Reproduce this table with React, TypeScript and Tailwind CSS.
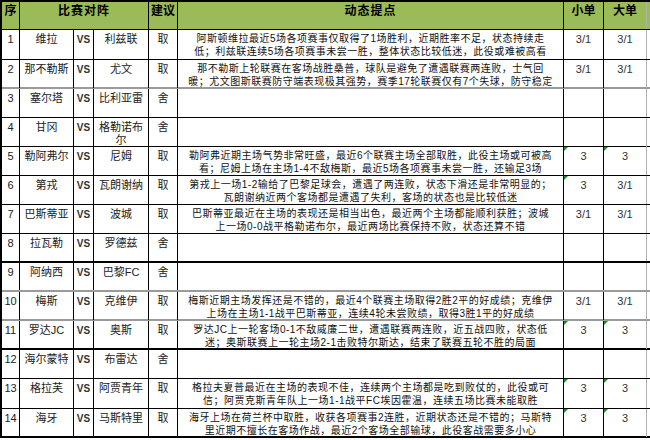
const COLS = 'grid grid-cols-[18px_54px_20px_55px_29px_386px_40px_43px]';

type Row = {
  n: string;
  home: string[];
  away: string[];
  pick: string;
  lines: string[];
  small: string;
  big: string;
  edge: string;
  h: string;
};

const rows: Row[] = [
  {
    n: '1', home: ['维拉'], away: ['利兹联'], pick: '取',
    lines: ['阿斯顿维拉最近5场各项赛事仅取得了1场胜利，近期胜率不足，状态持续走', '低；利兹联连续5场各项赛事未尝一胜，整体状态比较低迷，此役或难被高看'],
    small: '3/1', big: '3/1', edge: 'border-b border-black', h: 'h-[30px]',
  },
  {
    n: '2', home: ['那不勒斯'], away: ['尤文'], pick: '取',
    lines: ['那不勒斯上轮联赛在客场战胜桑普，球队是避免了遭遇联赛两连败，士气回', '暖；尤文图斯联赛防守端表现极其强势，赛季17轮联赛仅有7个失球，防守稳定'],
    small: '3/1', big: '3/1', edge: 'border-b-2 border-[#9a9a9a]', h: 'h-[29px]',
  },
  { n: '3', home: ['塞尔塔'], away: ['比利亚雷'], pick: '舍', lines: [], small: '', big: '', edge: 'border-b border-black', h: 'h-[29px]' },
  { n: '4', home: ['甘冈'], away: ['格勒诺布', '尔'], pick: '舍', lines: [], small: '', big: '', edge: 'border-b border-black', h: 'h-[29px]' },
  {
    n: '5', home: ['勒阿弗尔'], away: ['尼姆'], pick: '取',
    lines: ['勒阿弗近期主场气势非常旺盛，最近6个联赛主场全部取胜，此役主场或可被高', '看；尼姆上场在主场1-4不敌梅斯，最近5场各项赛事未尝一胜，还输足3场'],
    small: '3', big: '3', edge: 'border-b border-black', h: 'h-[29px]',
  },
  {
    n: '6', home: ['第戎'], away: ['瓦朗谢纳'], pick: '取',
    lines: ['第戎上一场1-2输给了巴黎足球会，遭遇了两连败，状态下滑还是非常明显的；', '瓦朗谢纳近两个客场都是遭遇了失利，客场的状态也是比较低迷'],
    small: '3', big: '3/1', edge: 'border-b border-black', h: 'h-[29px]',
  },
  {
    n: '7', home: ['巴斯蒂亚'], away: ['波城'], pick: '取',
    lines: ['巴斯蒂亚最近在主场的表现还是相当出色，最近两个主场都能顺利获胜；波城', '上一场0-0战平格勒诺布尔，最近两场比赛保持不败，状态还算不错'],
    small: '3/1', big: '3/1', edge: 'border-b border-black', h: 'h-[29px]',
  },
  { n: '8', home: ['拉瓦勒'], away: ['罗德兹'], pick: '舍', lines: [], small: '', big: '', edge: 'border-b-2 border-black', h: 'h-[29px]' },
  { n: '9', home: ['阿纳西'], away: ['巴黎FC'], pick: '舍', lines: [], small: '', big: '', edge: 'border-b-2 border-[#9a9a9a]', h: 'h-[29px]' },
  {
    n: '10', home: ['梅斯'], away: ['克维伊'], pick: '取',
    lines: ['梅斯近期主场发挥还是不错的，最近4个联赛主场取得2胜2平的好成绩；克维伊', '上场在主场1-1战平巴斯蒂亚，连续4轮未尝败绩，取得3胜1平的好成绩'],
    small: '3/1', big: '3/1', edge: 'border-b-2 border-[#9a9a9a]', h: 'h-[29px]',
  },
  {
    n: '11', home: ['罗达JC'], away: ['奥斯'], pick: '取',
    lines: ['罗达JC上一轮客场0-1不敌威廉二世，遭遇联赛两连败，近五战四败，状态低', '迷；奥斯联赛上一轮主场2-1击败特尔斯达，结束了联赛五轮不胜的局面'],
    small: '3', big: '3', edge: 'border-b-2 border-black', h: 'h-[29px]',
  },
  { n: '12', home: ['海尔蒙特'], away: ['布雷达'], pick: '舍', lines: [], small: '', big: '', edge: 'border-b border-black', h: 'h-[29px]' },
  {
    n: '13', home: ['格拉芙'], away: ['阿贾青年'], pick: '取',
    lines: ['格拉夫夏普最近在主场的表现不佳，连续两个主场都是吃到败仗的，此役或可', '信；阿贾克斯青年队上一场1-1战平FC埃因霍温，连续五场比赛未能取胜'],
    small: '3', big: '3', edge: 'border-b border-black', h: 'h-[30px]',
  },
  {
    n: '14', home: ['海牙'], away: ['马斯特里'], pick: '取',
    lines: ['海牙上场在荷兰杯中取胜，收获各项赛事2连胜，近期状态还是不错的；马斯特', '里近期不擅长在客场作战，最近2个客场全部输球，此役客战需要多小心'],
    small: '3', big: '3', edge: 'border-b-2 border-black', h: 'h-[29px]',
  },
];

// little green "number stored as text" flag, like Excel shows
const Flag = () => (
  <span className="absolute left-0 top-0 h-0 w-0 border-t-[4px] border-r-[4px] border-t-[#1e8a2e] border-r-transparent" />
);

const Odds = ({ value, last }: { value: string; last?: boolean }) => (
  <div
    className={`relative pt-[3px] text-center text-[11px] leading-[13px] text-[#333] ${
      last ? 'border-r border-[#b0b0b0]' : 'border-r border-black'
    }`}
  >
    {value === '3' && <Flag />}
    {value}
  </div>
);

export default function App() {
  return (
    <div className="w-[650px] h-[440px] overflow-hidden bg-white text-black font-['Liberation_Sans','Noto_Sans_CJK_SC',sans-serif]">
      <div className="border-l-2 border-t-2 border-black">
        <div className={`${COLS} h-[28px] border-b border-black bg-[#9bbb59] text-[12px] font-bold leading-[14px]`}>
          <div className="border-r border-black pt-[2px] text-center">序</div>
          <div className="col-span-3 border-r border-black pt-[2px] text-center tracking-[1px]">比赛对阵</div>
          <div className="border-r border-black pt-[2px] text-center">建议</div>
          <div className="border-r border-black pt-[2px] text-center tracking-[1px]">动态提点</div>
          <div className="border-r border-black pt-[2px] text-center">小单</div>
          <div className="border-r border-[#b0b0b0] pt-[2px] text-center">大单</div>
        </div>

        {rows.map((r) => (
          <div key={r.n} className={`${COLS} ${r.h} ${r.edge}`}>
            <div className="border-r border-black pt-[3px] text-center text-[11px] leading-[13px] text-[#222]">{r.n}</div>
            <div className="border-r border-black pt-[3px] text-center text-[11px] leading-[13px] text-[#222]">
              {r.home.map((t) => (
                <div key={t}>{t}</div>
              ))}
            </div>
            <div className="border-r border-black pt-[3px] text-center text-[10px] font-bold leading-[13px] text-[#333]">VS</div>
            <div className="border-r border-black pt-[3px] text-center text-[11px] leading-[13px] text-[#222]">
              {r.away.map((t) => (
                <div key={t}>{t}</div>
              ))}
            </div>
            <div className="border-r border-black pt-[3px] text-center text-[11px] leading-[13px] text-[#222]">{r.pick}</div>
            <div className="border-r border-black pt-[2px] text-center text-[10px] leading-[13px] tracking-[0.5px] text-[#111] whitespace-nowrap">
              {r.lines.map((l) => (
                <div key={l}>{l}</div>
              ))}
            </div>
            <Odds value={r.small} />
            <Odds value={r.big} last />
          </div>
        ))}
      </div>
    </div>
  );
}
